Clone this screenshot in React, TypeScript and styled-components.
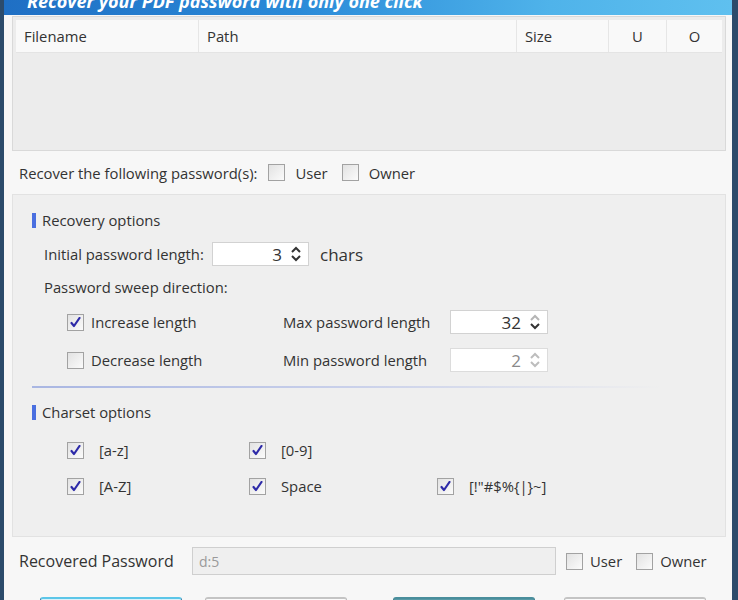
import React from 'react';
import styled, { createGlobalStyle } from 'styled-components';

const GlobalStyle = createGlobalStyle`
    html, body {
        margin: 0;
        padding: 0;
        background: #f7f7f7;
    }
    body {
        font-family: 'Open Sans', 'Noto Sans', sans-serif;
        color: #333;
    }
`;

const Frame = styled.div`
    width: 738px;
    height: 600px;
    box-sizing: border-box;
    border-left: 4px solid #2c4b6b;
    border-right: 6px solid #2c4b6b;
    background: #f7f7f7;
    overflow: hidden;
    display: flex;
    flex-direction: column;
`;

const Banner = styled.div`
    height: 15px;
    flex-shrink: 0;
    position: relative;
    overflow: hidden;
    background: linear-gradient(90deg, #1f6fc4 0%, #2a8ad8 40%, #4fb3ea 75%, #5fc0ef 100%);
`;

const BannerText = styled.div`
    position: absolute;
    left: 23px;
    top: -11px;
    font-size: 18px;
    font-weight: bold;
    font-style: italic;
    color: #fff;
    white-space: nowrap;
`;

const Body = styled.div`
    padding: 1px 6px 0 8px;
    display: flex;
    flex-direction: column;
`;

const FileTable = styled.div`
    height: 135px;
    box-sizing: border-box;
    border: 1px solid #d9d9d9;
    background: #ececec;
    padding: 3px 3px 0 3px;
`;

const HeaderRow = styled.div`
    display: grid;
    grid-template-columns: 183px 318px 92px 58px 1fr;
    height: 32px;
    background: #f9f9f9;
    border-bottom: 1px solid #e4e4e4;
`;

const HeaderCell = styled.div<{ center?: boolean }>`
    display: flex;
    align-items: center;
    justify-content: ${({ center }) => (center ? 'center' : 'flex-start')};
    padding-left: ${({ center }) => (center ? '0' : '8px')};
    font-size: 14.8px;
    border-right: 1px solid #e6e6e6;
    &:last-child {
        border-right: none;
    }
`;

const PasswordsRow = styled.div`
    height: 43px;
    display: flex;
    align-items: center;
    padding-left: 7px;
    font-size: 14.8px;
`;

const LeadLabel = styled.span`
    margin-right: 11px;
`;

const Spacer = styled.span<{ width: number }>`
    width: ${({ width }) => width}px;
    flex-shrink: 0;
`;

const CheckWrap = styled.label<{ gap?: number }>`
    display: inline-flex;
    align-items: center;
    gap: ${({ gap }) => gap ?? 8}px;
    font-size: 14.8px;
`;

const Box = styled.span`
    width: 17px;
    height: 17px;
    box-sizing: border-box;
    border: 1px solid #a2a2a2;
    background: linear-gradient(135deg, #e2e2e2, #fbfbfb);
    display: inline-flex;
    align-items: center;
    justify-content: center;
    flex-shrink: 0;
`;

const Panel = styled.div`
    height: 343px;
    box-sizing: border-box;
    border: 1px solid #e2e2e2;
    background: #efefef;
    padding: 17px 0 0 19px;
`;

const SectionTitle = styled.div<{ top?: number }>`
    display: flex;
    align-items: center;
    gap: 6px;
    font-size: 14.8px;
    height: 16px;
    margin-top: ${({ top }) => top ?? 0}px;
    &::before {
        content: '';
        width: 4px;
        height: 15px;
        background: #4a6fe0;
    }
`;

const FieldRow = styled.div<{ top: number }>`
    display: flex;
    align-items: center;
    margin-top: ${({ top }) => top}px;
    padding-left: 12px;
    font-size: 14.8px;
`;

const FieldLabel = styled.span`
    width: 168px;
`;

const Spin = styled.div<{ width: number; disabled?: boolean }>`
    width: ${({ width }) => width}px;
    height: 24px;
    box-sizing: border-box;
    background: #fff;
    border: 1px solid ${({ disabled }) => (disabled ? '#dcdcdc' : '#d2d2d2')};
    display: flex;
    align-items: center;
    justify-content: flex-end;
    padding-right: 6px;
    gap: 8px;
    font-size: 17px;
    color: ${({ disabled }) => (disabled ? '#8a8a8a' : '#333')};
`;

const Chars = styled.span`
    font-size: 17px;
    margin-left: 11px;
`;

const SweepGrid = styled.div`
    display: grid;
    grid-template-columns: 216px 167px 98px;
    row-gap: 14px;
    align-items: center;
    margin-top: 13px;
    padding-left: 35px;
    font-size: 14.8px;
`;

const Separator = styled.div`
    height: 2px;
    width: 629px;
    margin-top: 14px;
    background: linear-gradient(90deg, #a9b6e2 0%, #c9d0ea 50%, rgba(230, 230, 230, 0) 100%);
`;

const CharsetGrid = styled.div`
    display: grid;
    grid-template-columns: 182px 188px 200px;
    row-gap: 16px;
    margin-top: 20px;
    padding-left: 35px;
    font-size: 14.8px;
`;

const RecoveredRow = styled.div`
    height: 48px;
    display: flex;
    align-items: center;
    padding-left: 7px;
`;

const BigLabel = styled.span`
    font-size: 16px;
    width: 173px;
`;

const ResultInput = styled.div`
    width: 364px;
    height: 28px;
    box-sizing: border-box;
    border: 1px solid #cfcfcf;
    background: #efefef;
    color: #9a9a9a;
    font-size: 14px;
    display: flex;
    align-items: center;
    padding-left: 6px;
    margin-right: 10px;
`;

const ButtonRow = styled.div`
    display: flex;
    margin-top: 12px;
    padding-left: 28px;
`;

const Button = styled.div<{ variant: 'blue' | 'plain' | 'teal'; gap: number }>`
    width: 142px;
    height: 30px;
    margin-right: ${({ gap }) => gap}px;
    box-sizing: border-box;
    border-radius: 3px;
    border: 1px solid
        ${({ variant }) => (variant === 'blue' ? '#3a7fa8' : variant === 'teal' ? '#3f7f8c' : '#b8b8b8')};
    border-top-width: 2px;
    border-top-color: ${({ variant }) =>
        variant === 'blue' ? '#5cc6e8' : variant === 'teal' ? '#4a8e9c' : '#c4c4c4'};
    background: ${({ variant }) =>
        variant === 'blue' ? '#d9f1fa' : variant === 'teal' ? '#5a9aa6' : '#fbfbfb'};
`;

const Check = ({ checked }: { checked?: boolean }) => (
    <Box>
        {checked && (
            <svg width="11" height="11" viewBox="0 0 11 11">
                <path
                    d="M1.5 6 L4 9 L9.5 1"
                    fill="none"
                    stroke="#2d2aa8"
                    strokeWidth="2.2"
                    strokeLinecap="round"
                    strokeLinejoin="round"
                />
            </svg>
        )}
    </Box>
);

const Arrows = ({ disabled, downBold }: { disabled?: boolean; downBold?: boolean }) => (
    <svg width="12" height="18" viewBox="0 0 12 18">
        <path
            d="M2 7 L6 3 L10 7"
            fill="none"
            stroke={disabled ? '#bdbdbd' : downBold ? '#b5b5b5' : '#333'}
            strokeWidth="2"
        />
        <path
            d="M2 11 L6 15 L10 11"
            fill="none"
            stroke={disabled ? '#bdbdbd' : '#333'}
            strokeWidth="2"
        />
    </svg>
);

const Option = ({ label, checked, gap }: { label: string; checked?: boolean; gap?: number }) => (
    <CheckWrap gap={gap}>
        <Check checked={checked} />
        {label}
    </CheckWrap>
);

const App = () => (
    <>
        <GlobalStyle />
        <Frame>
            <Banner>
                <BannerText>Recover your PDF password with only one click</BannerText>
            </Banner>
            <Body>
                <FileTable>
                    <HeaderRow>
                        <HeaderCell>Filename</HeaderCell>
                        <HeaderCell>Path</HeaderCell>
                        <HeaderCell>Size</HeaderCell>
                        <HeaderCell center>U</HeaderCell>
                        <HeaderCell center>O</HeaderCell>
                    </HeaderRow>
                </FileTable>

                <PasswordsRow>
                    <LeadLabel>Recover the following password(s):</LeadLabel>
                    <Option label="User" gap={10} />
                    <Spacer width={14} />
                    <Option label="Owner" gap={10} />
                </PasswordsRow>

                <Panel>
                    <SectionTitle>Recovery options</SectionTitle>
                    <FieldRow top={14}>
                        <FieldLabel>Initial password length:</FieldLabel>
                        <Spin width={97}>
                            3
                            <Arrows />
                        </Spin>
                        <Chars>chars</Chars>
                    </FieldRow>
                    <FieldRow top={11}>Password sweep direction:</FieldRow>
                    <SweepGrid>
                        <Option label="Increase length" checked gap={7} />
                        <span>Max password length</span>
                        <Spin width={98}>
                            32
                            <Arrows downBold />
                        </Spin>
                        <Option label="Decrease length" gap={7} />
                        <span>Min password length</span>
                        <Spin width={98} disabled>
                            2
                            <Arrows disabled />
                        </Spin>
                    </SweepGrid>
                    <Separator />
                    <SectionTitle top={16}>Charset options</SectionTitle>
                    <CharsetGrid>
                        <Option label="[a-z]" checked gap={15} />
                        <Option label="[0-9]" checked gap={15} />
                        <span />
                        <Option label="[A-Z]" checked gap={15} />
                        <Option label="Space" checked gap={15} />
                        <Option label={'[!"#$%{|}~]'} checked gap={15} />
                    </CharsetGrid>
                </Panel>

                <RecoveredRow>
                    <BigLabel>Recovered Password</BigLabel>
                    <ResultInput>d:5</ResultInput>
                    <Option label="User" gap={7} />
                    <Spacer width={14} />
                    <Option label="Owner" gap={7} />
                </RecoveredRow>

                <ButtonRow>
                    <Button variant="blue" gap={23} />
                    <Button variant="plain" gap={46} />
                    <Button variant="teal" gap={29} />
                    <Button variant="plain" gap={0} />
                </ButtonRow>
            </Body>
        </Frame>
    </>
);

export default App;
